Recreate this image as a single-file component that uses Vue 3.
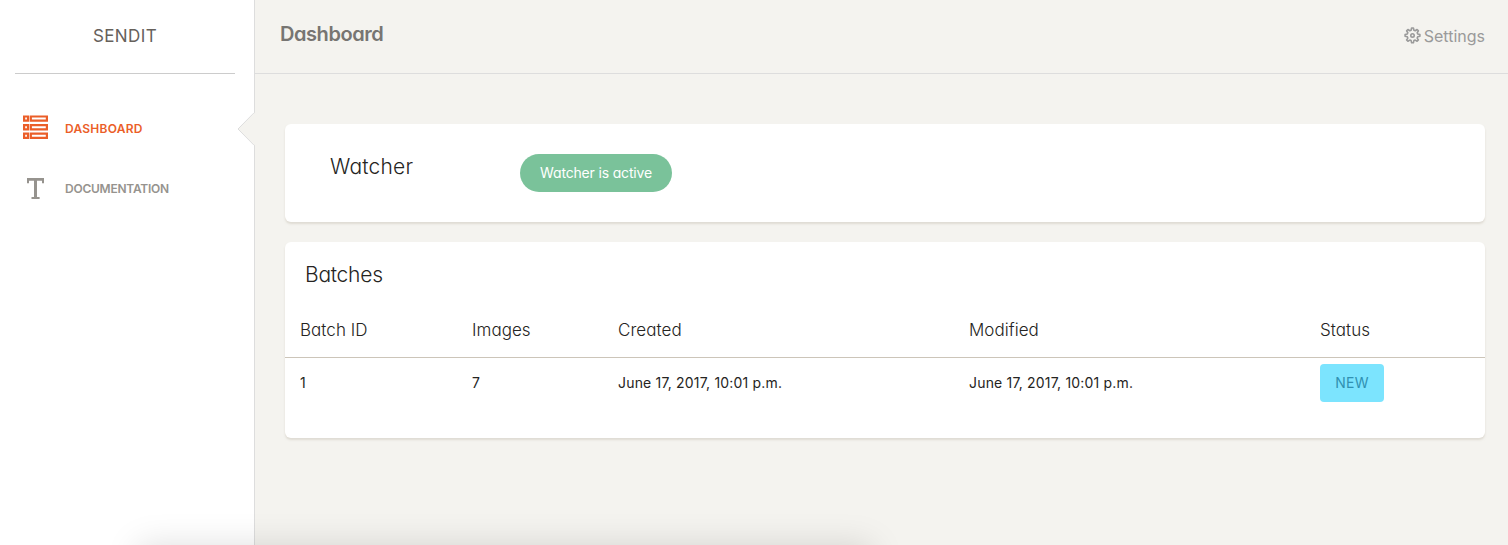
<script setup>
const columns = ['Batch ID', 'Images', 'Created', 'Modified', 'Status']
const batches = [
  { id: 1, images: 7, created: 'June 17, 2017, 10:01 p.m.', modified: 'June 17, 2017, 10:01 p.m.', status: 'NEW' },
]
</script>

<template>
  <div class="page">
    <aside class="sidebar">
      <div class="brand"><span>SENDIT</span></div>
      <nav class="menu">
        <a class="item active">
          <svg class="icon" width="26" height="26" viewBox="0 0 26 26">
            <g fill="none" stroke="currentColor" stroke-width="2.200">
              <path d="M2.100 2.500h3.900v4.200H2.100zM8.800 2.500h16.100v4.200H8.800z" />
              <path d="M2.100 11.100h3.900v4.200H2.100zM8.800 11.100h16.100v4.200H8.800z" />
              <path d="M2.100 19.700h3.900v4.200H2.100zM8.800 19.700h16.100v4.200H8.800z" />
            </g>
          </svg>
          <span class="dash-label">DASHBOARD</span>
          <svg class="notch" width="18" height="34" viewBox="0 0 18 34">
            <path d="M18 0.5 1 17l17 16.5z" fill="#f4f3ef" />
            <path d="M17 0.8 1 17l16 16.2" fill="none" stroke="#ddd" />
          </svg>
        </a>
        <a class="item">
          <svg class="icon" width="26" height="26" viewBox="0 0 26 26">
            <path d="M5 4h17v5.200h-2V6.700h-5V23h2.600v2H9.500v-2H12V6.700H7v2.500H5z" fill="currentColor" />
          </svg>
          <span class="doc-label">DOCUMENTATION</span>
        </a>
      </nav>
    </aside>
    <main class="main">
      <header class="top">
        <h1><span>Dashboard</span></h1>
        <a class="settings">
          <svg width="17" height="17" viewBox="0 0 17 17" fill="none" stroke="currentColor" stroke-width="1.600" stroke-linejoin="round">
            <path d="M7.600 1h1.800l.5 2.200 1.300.5 1.900-1.200 1.300 1.300-1.200 1.900.5 1.300 2.200.5v1.800l-2.200.5-.5 1.300 1.200 1.900-1.300 1.300-1.900-1.200-1.300.5-.5 2.200H7.600l-.5-2.200-1.300-.5-1.900 1.200-1.300-1.300 1.200-1.900-.5-1.300-2.200-.5V7.500l2.200-.5.5-1.300-1.200-1.900 1.300-1.300 1.900 1.200 1.300-.5z" />
            <circle cx="8.500" cy="8.400" r="1.700" />
          </svg>
          <span>Settings</span>
        </a>
      </header>
      <section class="content">
        <div class="card watcher">
          <h2><span>Watcher</span></h2>
          <button class="pill"><span>Watcher is active</span></button>
        </div>
        <div class="card batches">
          <h2><span>Batches</span></h2>
          <div class="row head">
            <span v-for="c in columns" :key="c">{{ c }}</span>
          </div>
          <div v-for="b in batches" :key="b.id" class="row body">
            <span>{{ b.id }}</span>
            <span>{{ b.images }}</span>
            <span class="date">{{ b.created }}</span>
            <span class="date">{{ b.modified }}</span>
            <span><b class="tag">{{ b.status }}</b></span>
          </div>
        </div>
      </section>
    </main>
    <div class="shade"></div>
  </div>
</template>

<style>
body { margin: 0; overflow: hidden; }
</style>

<style scoped>
.page {
  display: flex;
  height: 545px;
  position: relative;
  overflow: hidden;
  background: #f4f3ef;
  font-family: Inter, "Open Sans", sans-serif;
  font-feature-settings: "cv11";
  font-weight: 400;
  color: #252422;
  white-space: nowrap;
}
.sidebar { width: 254px; background: #fff; border-right: 1px solid #ddd; flex: none; }
.brand {
  height: 73px;
  margin: 0 19px 0 15px;
  border-bottom: 1px solid #ccc;
  line-height: 73px;
  text-align: center;
  font-size: 17px;
  letter-spacing: .4px;
  color: #66615b;
}
.menu { padding-top: 24px; }
.item {
  display: flex;
  align-items: center;
  height: 60px;
  padding-left: 22px;
  position: relative;
  font-size: 12px;
  font-weight: 600;
  color: #96938e;
}
.item.active { color: #eb5e28; }
.dash-label { letter-spacing: .25px; }
.doc-label { letter-spacing: -.25px; }
.icon { margin: -2px 17px 0 0; }
.notch { position: absolute; left: 237px; top: 14px; }
.main { flex: 1; }
.top {
  height: 73px;
  border-bottom: 1px solid #ddd;
  display: flex;
  justify-content: space-between;
  padding: 0 23px 0 25px;
}
h1 { margin: 21px 0 0; font-size: 20px; line-height: 26px; font-weight: 600; letter-spacing: -.43px; color: #777572; }
.settings { display: flex; margin-top: 25px; height: 22px; line-height: 22px; font-size: 16px; color: #9a9a9a; }
.settings svg { margin: 2px 3px 0 0; }
.content { padding: 50px 23px 0 30px; }
.card { background: #fff; border-radius: 6px; box-shadow: 0 2px 2px rgba(204, 197, 185, .5); }
h2 { margin: 0; font-weight: 300; font-size: 21px; line-height: 30px; }
.watcher { height: 98px; display: flex; margin-bottom: 20px; }
.watcher h2 { width: 190px; padding: 28px 0 0 45px; letter-spacing: .2px; }
.pill {
  margin: 30px 0 0;
  width: 152px;
  height: 38px;
  padding: 0 0 1px;
  border: 0;
  border-radius: 19px;
  background: #7ac29a;
  color: #fff;
  font: inherit;
  font-size: 14px;
  letter-spacing: -.17px;
}
.batches { height: 196px; }
.batches h2 { padding: 18px 20px 0; height: 42px; letter-spacing: -.25px; }
.row { display: grid; grid-template-columns: 172px 146px 351px 351px 165px; padding-left: 15px; }
.head { height: 55px; line-height: 56px; border-bottom: 1px solid #ccc5b9; font-size: 17px; font-weight: 300; letter-spacing: .05px; }
.body { height: 50px; line-height: 50px; font-size: 14px; }
.date { letter-spacing: .18px; }
.tag {
  display: block;
  width: 64px;
  height: 38px;
  margin-top: 6px;
  border-radius: 4px;
  background: #7ce4fe;
  color: #3091b2;
  line-height: 38px;
  text-align: center;
  font-weight: 400;
  letter-spacing: .2px;
}
.shade {
  position: absolute;
  left: 138px;
  top: 545px;
  width: 734px;
  height: 100px;
  box-shadow: 0 0 32px rgba(0, 0, 0, .13);
  pointer-events: none;
}
</style>
